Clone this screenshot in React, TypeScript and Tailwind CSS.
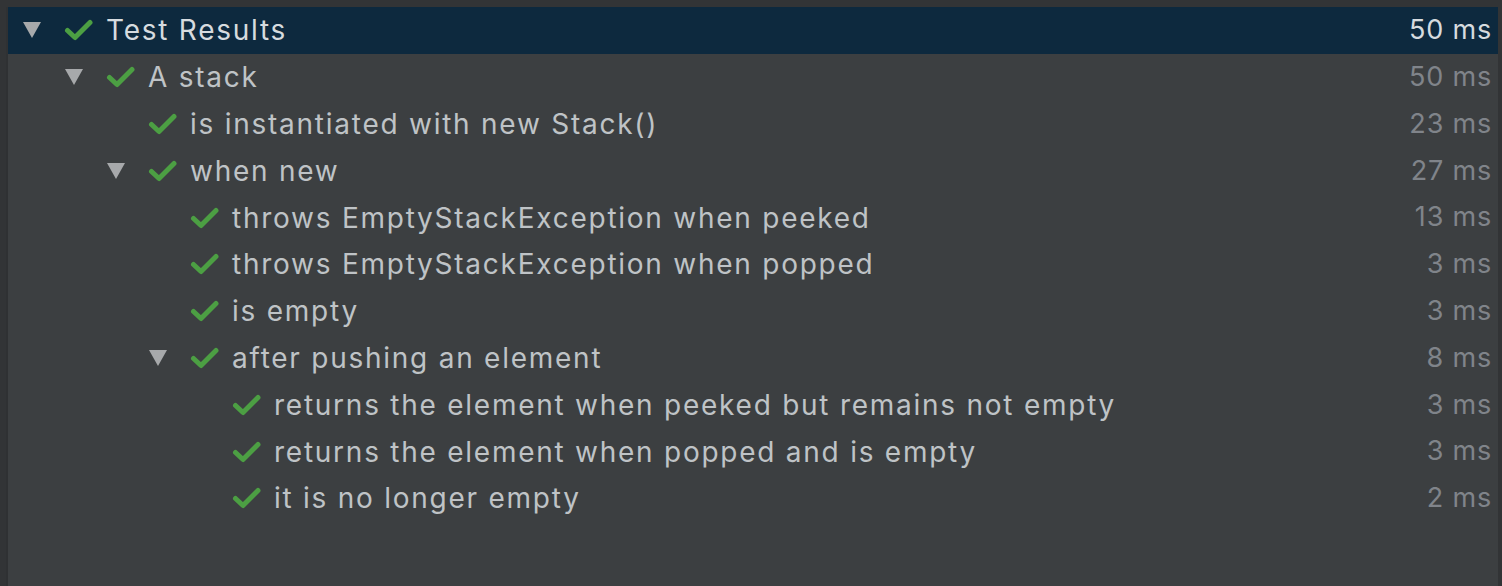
import React from "react";

type Row = { label: string; ms: string; depth: number; expandable?: boolean; selected?: boolean };

const rows: Row[] = [
  { label: "Test Results", ms: "50 ms", depth: 0, expandable: true, selected: true },
  { label: "A stack", ms: "50 ms", depth: 1, expandable: true },
  { label: "is instantiated with new Stack()", ms: "23 ms", depth: 2 },
  { label: "when new", ms: "27 ms", depth: 2, expandable: true },
  { label: "throws EmptyStackException when peeked", ms: "13 ms", depth: 3 },
  { label: "throws EmptyStackException when popped", ms: "3 ms", depth: 3 },
  { label: "is empty", ms: "3 ms", depth: 3 },
  { label: "after pushing an element", ms: "8 ms", depth: 3, expandable: true },
  { label: "returns the element when peeked but remains not empty", ms: "3 ms", depth: 4 },
  { label: "returns the element when popped and is empty", ms: "3 ms", depth: 4 },
  { label: "it is no longer empty", ms: "2 ms", depth: 4 },
];

function Check() {
  return (
    <svg width="30" height="26" viewBox="0 0 30 26" className="shrink-0">
      <path d="M3.5 13.5 L11 20.5 L26 5.5" fill="none" stroke="#4c9f43" strokeWidth="5" strokeLinecap="round" strokeLinejoin="round" />
    </svg>
  );
}

function Triangle() {
  return (
    <svg width="20" height="18" viewBox="0 0 20 18">
      <path d="M1 1 L19 1 L10 17 Z" fill="#a7a9ab" />
    </svg>
  );
}

export default function App() {
  return (
    <div
      className="w-[1502px] h-[586px] bg-[#323436] pt-[7px] pl-[6px] overflow-hidden"
      style={{ fontFamily: "Inter, 'Noto Sans', sans-serif" }}
    >
      <div className="h-full border-l-2 border-[#2f3133] bg-[#3c3f41] mr-[4px]">
        {rows.map((row, i) => (
          <div
            key={i}
            className={`flex items-center h-[46.8px] pr-[6px] ${row.selected ? "bg-[#0d293e]" : ""}`}
          >
            <div className="flex items-center" style={{ paddingLeft: 14 + row.depth * 42 }}>
              <div className="w-[42px] flex items-center">{row.expandable && <Triangle />}</div>
              <Check />
              <span
                className={`ml-[12px] text-[28px] tracking-[1.75px] whitespace-nowrap ${row.selected ? "text-[#d6dbdf]" : "text-[#bfc3c6]"}`}
              >
                {row.label}
              </span>
            </div>
            <span
              className={`ml-auto text-[27px] tracking-[0.8px] whitespace-nowrap ${row.selected ? "text-[#d6dbdf]" : "text-[#80848a]"}`}
            >
              {row.ms}
            </span>
          </div>
        ))}
      </div>
    </div>
  );
}
